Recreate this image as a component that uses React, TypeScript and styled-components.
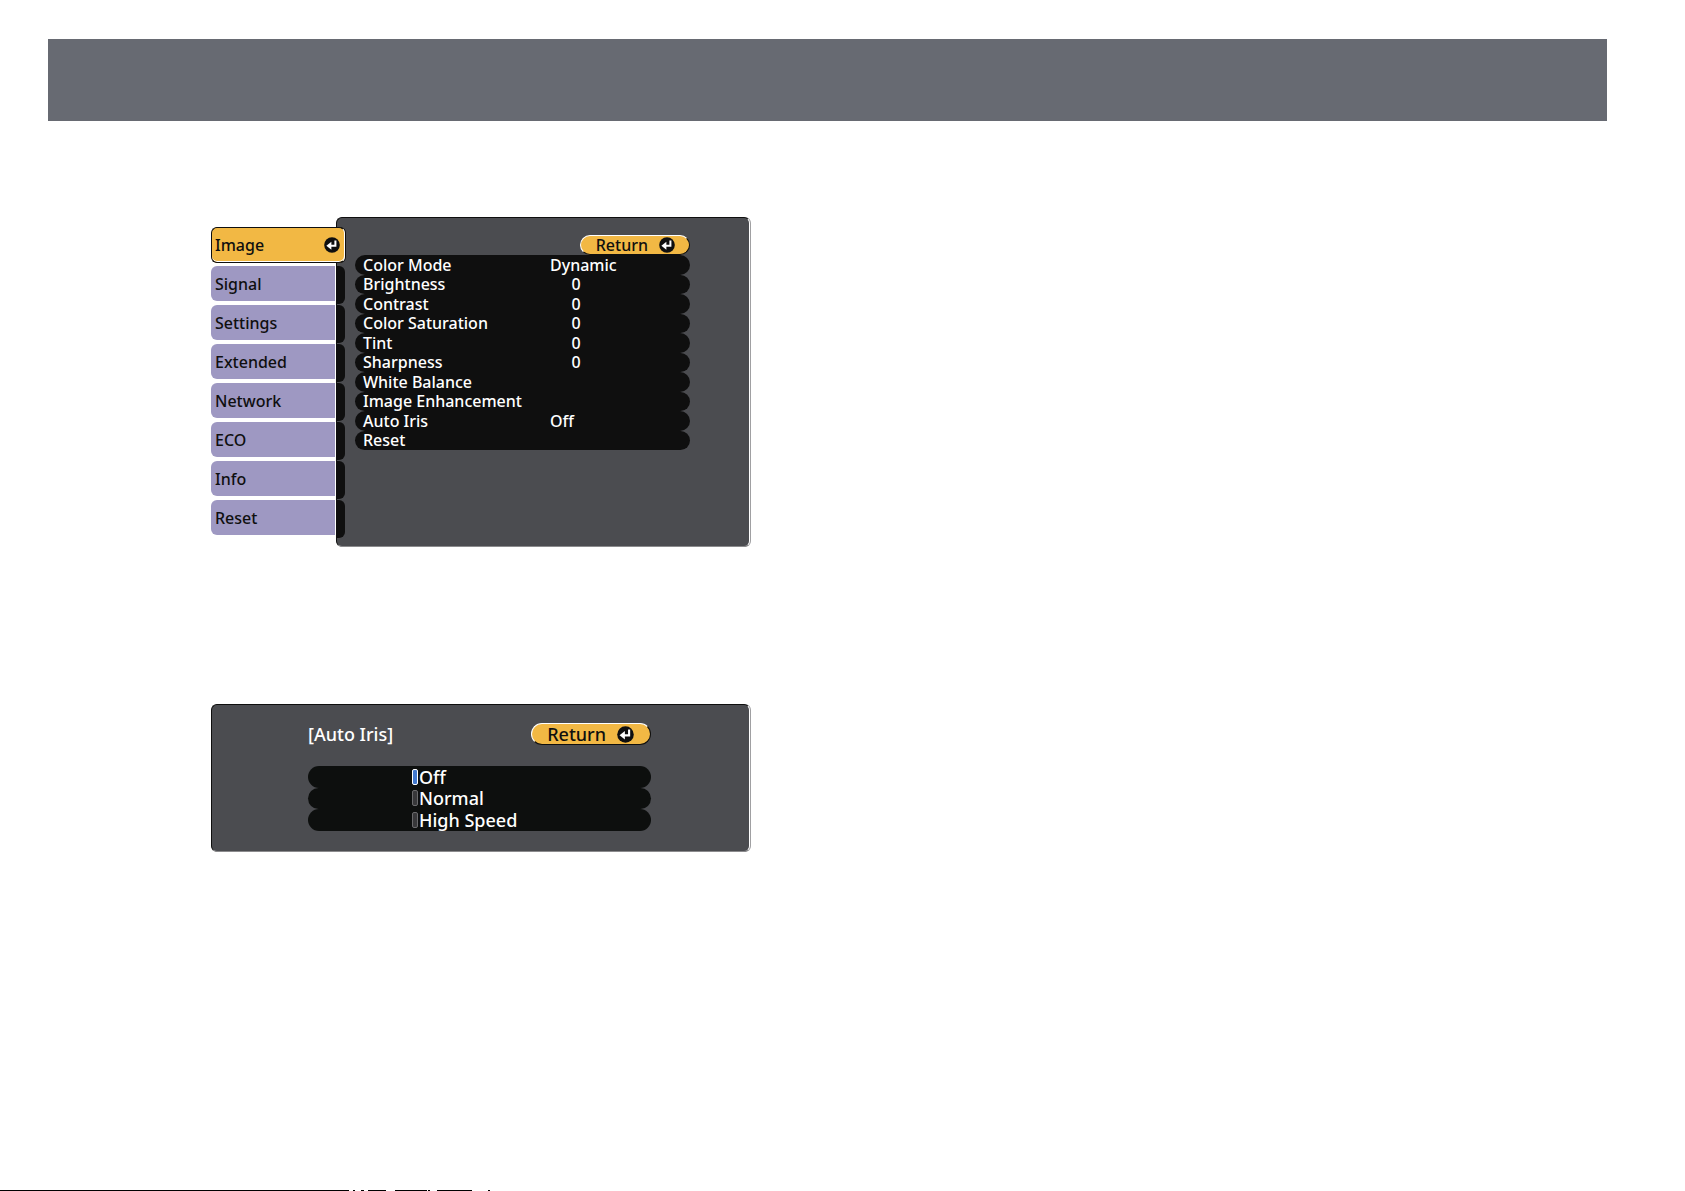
import React, { useState } from "react";
import styled, { createGlobalStyle } from "styled-components";

const GlobalStyle = createGlobalStyle`
  * { box-sizing: border-box; }
  body { margin: 0; background: #fff; font-family: "Noto Sans", "Liberation Sans", sans-serif; }
  button { font: inherit; border: 0; padding: 0; cursor: pointer; text-align: left; }
  ul { list-style: none; margin: 0; padding: 0; }
`;

const Page = styled.div`
  min-height: 100vh;
  display: flex;
  flex-direction: column;
`;

const Banner = styled.header`
  height: 82px;
  margin: 39px 78px 0 48px;
  background: #676a72;
`;

const Content = styled.main`
  flex: 1;
  display: flex;
  flex-direction: column;
  gap: 157px;
  width: 100%;
  max-width: 750px;
  padding: 96px 0 0 211px;
`;

const Menu = styled.section`
  display: flex;
  align-items: stretch;
`;

const TabList = styled.ul`
  flex: none;
  width: 134px;
  margin-right: -9px;
  padding: 10px 0 8px;
  z-index: 1;
`;

const TabItem = styled.li`
  height: 39px;
  color: #0f0f0f;
`;

const Tab = styled.button<{ $active: boolean }>`
  display: grid;
  grid-template-columns: 124px 8px;
  column-gap: 2px;
  align-items: start;
  width: 100%;
  height: 38px;
  color: inherit;
  font-size: 16px;
  font-weight: 500;
  line-height: 20px;
  background: none;
  ${(p) =>
    p.$active &&
    `
    grid-template-columns: 1fr 20px;
    align-items: center;
    height: 36px;
    padding-left: 3px;
    background: #f2b844;
    border: 1px solid #0f0f0f;
    border-right-color: #fff;
    border-radius: 6px;
    box-shadow: inset 0 -1px #fff, 1px 0 #0f0f0f;
  `}
`;

const TabFace = styled.span`
  display: flex;
  align-items: center;
  height: 35px;
  padding-left: 4px;
  background: #9e98c2;
  border-radius: 6px 0 0 6px;
`;

const TabNub = styled.span`
  height: 38px;
  background: #0f0f0f;
  border-radius: 0 6px 6px 0;
`;

const Panel = styled.div`
  flex: 1;
  min-width: 0;
  background: #4b4c50;
  border: 1px solid #0f0f0f;
  border-right-color: #fff;
  border-bottom-color: #8b8b8d;
  border-radius: 6px;
  box-shadow: 1px 0 #a0a0a2;
`;

const MenuPanel = styled(Panel)`
  height: 330px;
  padding: 17px 59px 0 18px;
  box-shadow: 1px 0 #a0a0a2, -1px 0 #fff;
`;

const ReturnButton = styled.button<{ $large?: boolean }>`
  display: flex;
  align-items: center;
  justify-content: flex-end;
  gap: 11px;
  width: ${(p) => (p.$large ? 120 : 110)}px;
  height: ${(p) => (p.$large ? 22 : 20)}px;
  margin-left: auto;
  padding-right: ${(p) => (p.$large ? 16 : 14)}px;
  color: #0f0f0f;
  font-size: ${(p) => (p.$large ? 18 : 16)}px;
  font-weight: 500;
  line-height: 18px;
  background: #f2b844;
  border: 1px solid #0f0f0f;
  border-top-color: #fff;
  border-left-color: #fff;
  border-radius: 11px;
`;

const Settings = styled.ul`
  display: grid;
  grid-template-rows: repeat(10, 1fr);
  height: 195px;
`;

const SettingRow = styled.button`
  display: grid;
  grid-template-columns: 187px 52px;
  align-items: center;
  width: 100%;
  height: 100%;
  padding-left: 8px;
  color: #fff;
  font-size: 16px;
  font-weight: 500;
  line-height: 18px;
  white-space: nowrap;
  background: #0f0f0f;
  border-radius: 10px;
`;

const Value = styled.span<{ $centered: boolean }>`
  text-align: ${(p) => (p.$centered ? "center" : "left")};
`;

const Dialog = styled(Panel)`
  flex: none;
  height: 148px;
  padding: 18px 98px 0 96px;
`;

const DialogHead = styled.div`
  display: flex;
  align-items: center;
  margin-bottom: 21px;
`;

const DialogTitle = styled.h2`
  margin: 0;
  color: #fff;
  font-size: 18px;
  font-weight: 500;
  line-height: 22px;
`;

const Options = styled.div`
  display: grid;
  grid-template-rows: repeat(3, 1fr);
  height: 65px;
`;

const Option = styled.label`
  display: flex;
  align-items: center;
  gap: 1px;
  padding-left: 104px;
  color: #fff;
  font-size: 18px;
  font-weight: 500;
  line-height: 20px;
  background: #0d0f0e;
  border-radius: 11px;
`;

const Marker = styled.input`
  appearance: none;
  width: 6px;
  height: 16px;
  margin: 0;
  background: #38383a;
  border: 1px solid #6a6a6c;
  border-radius: 2px;
  &:checked {
    background: #4279cf;
    border-color: #fff;
  }
`;

const Footer = styled.footer`
  display: flex;
  height: 1px;
`;

const Rule = styled.div`
  width: 349px;
  background: #000;
`;

const EnterIcon = ({ size = 16 }: { size?: number }) => (
  <svg width={size} height={size} viewBox="0 0 16 16" aria-hidden="true">
    <circle cx="8" cy="8" r="7.8" fill="#0f0f0f" />
    <path d="M11.4 3.4V8.8H6.5" fill="none" stroke="#fff" strokeWidth="2" />
    <path d="M2.4 8.8 7.4 4.8v8z" fill="#fff" />
  </svg>
);

const tabs = ["Image", "Signal", "Settings", "Extended", "Network", "ECO", "Info", "Reset"];

const settings: [string, string][] = [
  ["Color Mode", "Dynamic"],
  ["Brightness", "0"],
  ["Contrast", "0"],
  ["Color Saturation", "0"],
  ["Tint", "0"],
  ["Sharpness", "0"],
  ["White Balance", ""],
  ["Image Enhancement", ""],
  ["Auto Iris", "Off"],
  ["Reset", ""],
];

const dashes = [
  [4, 2], [12, 3], [19, 18], [46, 32], [79, 2], [88, 35], [139, 2],
];

export default function App() {
  const [tab, setTab] = useState("Image");
  const [iris, setIris] = useState("Off");
  return (
    <Page>
      <GlobalStyle />
      <Banner />
      <Content>
        <Menu>
          <TabList>
            {tabs.map((name) => (
              <TabItem key={name}>
                <Tab $active={tab === name} onClick={() => setTab(name)}>
                  {tab === name ? (
                    <>
                      {name}
                      <EnterIcon />
                    </>
                  ) : (
                    <>
                      <TabFace>{name}</TabFace>
                      <TabNub />
                    </>
                  )}
                </Tab>
              </TabItem>
            ))}
          </TabList>
          <MenuPanel>
            <ReturnButton>
              Return
              <EnterIcon />
            </ReturnButton>
            <Settings>
              {settings.map(([name, value]) => (
                <li key={name}>
                  <SettingRow>
                    <span>{name}</span>
                    <Value $centered={value === "0"}>{value}</Value>
                  </SettingRow>
                </li>
              ))}
            </Settings>
          </MenuPanel>
        </Menu>
        <Dialog>
          <DialogHead>
            <DialogTitle>[Auto Iris]</DialogTitle>
            <ReturnButton $large>
              Return
              <EnterIcon size={17} />
            </ReturnButton>
          </DialogHead>
          <Options role="radiogroup" aria-label="Auto Iris">
            {["Off", "Normal", "High Speed"].map((name) => (
              <Option key={name}>
                <Marker type="radio" name="iris" checked={iris === name} onChange={() => setIris(name)} />
                {name}
              </Option>
            ))}
          </Options>
        </Dialog>
      </Content>
      <Footer>
        <Rule />
        <svg width="142" height="1" aria-hidden="true">
          {dashes.map(([x, w]) => (
            <rect key={x} x={x} width={w} height="1" fill="#000" />
          ))}
        </svg>
      </Footer>
    </Page>
  );
}
